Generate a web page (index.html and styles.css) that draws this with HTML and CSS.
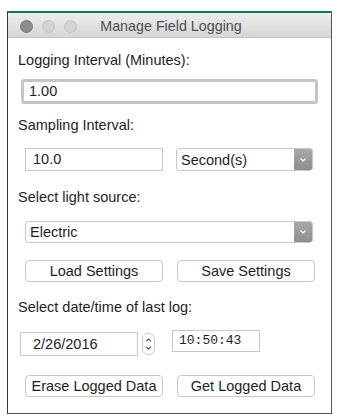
FILE: index.html
```html
<!DOCTYPE html>
<html lang="en">
<head>
  <meta charset="UTF-8" />
  <title>Manage Field Logging</title>
  <link rel="stylesheet" href="styles.css">
</head>
<body>
  <div class="window">
    <div class="titlebar">
      <div class="lights">
        <span class="light close"></span>
        <span class="light"></span>
        <span class="light"></span>
      </div>
      <div class="title">Manage Field Logging</div>
    </div>

    <div class="content">
      <div class="label l1">Logging Interval (Minutes):</div>
      <div class="field focus">1.00</div>

      <div class="label l2">Sampling Interval:</div>
      <div class="row r1">
        <div class="field small">10.0</div>
        <div class="select unit">
          <span>Second(s)</span>
          <span class="arrow"><svg width="8" height="6" viewBox="0 0 8 6"><path d="M1.5 1.5 L4 4 L6.5 1.5" fill="none" stroke="#fff" stroke-width="1.2"/></svg></span>
        </div>
      </div>

      <div class="label l3">Select light source:</div>
      <div class="select wide">
        <span>Electric</span>
        <span class="arrow"><svg width="8" height="6" viewBox="0 0 8 6"><path d="M1.5 1.5 L4 4 L6.5 1.5" fill="none" stroke="#fff" stroke-width="1.2"/></svg></span>
      </div>

      <div class="row buttons b1">
        <button>Load Settings</button>
        <button>Save Settings</button>
      </div>

      <div class="label l4">Select date/time of last log:</div>
      <div class="row dt">
        <div class="field date">2/26/2016</div>
        <div class="stepper">
          <svg width="12" height="22" viewBox="0 0 12 22"><path d="M3.5 8 L6 5.5 L8.5 8" fill="none" stroke="#555" stroke-width="1.2"/><path d="M3.5 14 L6 16.5 L8.5 14" fill="none" stroke="#555" stroke-width="1.2"/></svg>
        </div>
        <div class="field time">10:50:43</div>
      </div>

      <div class="row buttons b2">
        <button>Erase Logged Data</button>
        <button>Get Logged Data</button>
      </div>
    </div>
  </div>
</body>
</html>
```

FILE: styles.css
```css
body {
  margin: 0;
  background: #fff;
  font-family: "Liberation Sans", Arial, sans-serif;
  font-size: 14.5px;
  color: #1e1e1e;
}
.window {
  margin: 11px 0 0 7px;
  width: 325px;
  height: 403px;
  box-sizing: border-box;
  border-top: 2px solid #0d7a52;
  border-left: 1px solid #333;
  border-right: 1px solid #555;
  border-bottom: 1px solid #555;
  background: #fff;
  display: flex;
  flex-direction: column;
}
.titlebar {
  height: 24px;
  background: linear-gradient(#ededed, #d6d6d6);
  border-bottom: 1px solid #c4c4c4;
  border-radius: 4px 4px 0 0;
  display: flex;
  align-items: center;
  position: relative;
}
.lights {
  display: flex;
  gap: 9px;
  padding: 2px 0 0 12px;
}
.light {
  width: 13px;
  height: 13px;
  border-radius: 50%;
  background: #d3d3d3;
  border: 1px solid #c3c3c3;
  box-sizing: border-box;
}
.light.close {
  background: #8c8c8c;
  border-color: #7a7a7a;
}
.title {
  flex: 1;
  text-align: center;
  color: #4d4d4d;
  font-size: 14.3px;
  margin-left: -66px;
  padding-top: 2px;
}
.content {
  display: flex;
  flex-direction: column;
  padding: 0 13px 0 10px;
}
.label {
  line-height: 17px;
}
.l1 { margin-top: 14px; }
.l2 { margin-top: 13px; }
.l3 { margin-top: 18px; }
.l4 { margin-top: 17px; }
.field {
  box-sizing: border-box;
  border: 1px solid #c9c9c9;
  background: #fff;
  line-height: 21px;
  padding-left: 7px;
}
.field.focus {
  margin: 10px 0 0 3px;
  height: 25px;
  border: 3px solid #c6c6c6;
  border-radius: 3px;
  line-height: 19px;
  padding-left: 5px;
}
.row {
  display: flex;
  align-items: center;
}
.r1 {
  margin: 14px 0 0 7px;
  height: 23px;
}
.field.small {
  width: 138px;
  height: 23px;
}
.select {
  box-sizing: border-box;
  display: flex;
  align-items: center;
  border: 1px solid #c9c9c9;
  border-radius: 3px;
  background: #fff;
  padding-left: 4px;
}
.select span:first-child {
  flex: 1;
}
.select .arrow {
  width: 18px;
  align-self: stretch;
  background: linear-gradient(#a8a8a8, #8e8e8e);
  border-radius: 0 2px 2px 0;
  display: flex;
  align-items: center;
  justify-content: center;
}
.select.unit {
  margin-left: 13px;
  width: 137px;
  height: 23px;
}
.select.wide {
  margin: 15px 0 0 7px;
  width: 288px;
  height: 22px;
}
.buttons {
  gap: 14px;
  margin-left: 7px;
}
.b1 { margin-top: 17px; }
.b2 { margin-top: 19px; }
button {
  width: 138px;
  height: 22px;
  box-sizing: border-box;
  background: #fff;
  border: 1px solid #c8c8c8;
  border-radius: 4px;
  font-family: "Liberation Sans", Arial, sans-serif;
  font-size: 14.5px;
  color: #1e1e1e;
  padding: 0;
}
.dt {
  margin: 14px 0 0 2px;
  height: 26px;
}
.field.date {
  width: 118px;
  height: 24px;
  line-height: 23px;
  padding-left: 12px;
  margin-top: 2px;
}
.stepper {
  margin-left: 4px;
  width: 13px;
  height: 22px;
  border: 1px solid #c9c9c9;
  border-radius: 6px;
  box-sizing: border-box;
  display: flex;
  align-items: center;
  justify-content: center;
  margin-top: 2px;
}
.stepper svg {
  display: block;
}
.field.time {
  margin-left: 17px;
  width: 88px;
  height: 22px;
  font-family: "Liberation Mono", "Courier New", monospace;
  font-size: 13px;
  padding-left: 6px;
  margin-top: -4px;
  line-height: 20px;
}
```
